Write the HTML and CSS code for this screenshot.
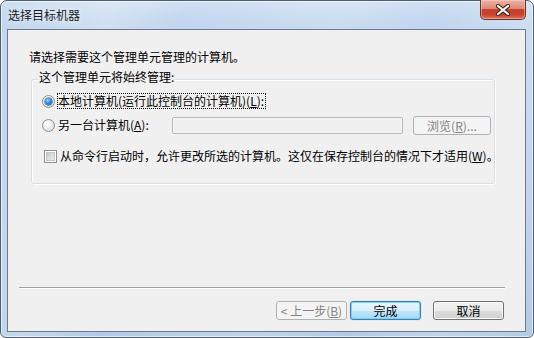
FILE: index.html
```html
<!DOCTYPE html>
<html lang="zh-CN">
<head>
<meta charset="utf-8">
<title>选择目标机器</title>
<link rel="stylesheet" href="styles.css">
</head>
<body>
<div class="window">
  <div class="titlebar">
    <span class="title">选择目标机器</span>
    <div class="close">
      <svg width="14" height="12" viewBox="0 0 14 12">
        <path d="M2 2 L12 10 M12 2 L2 10" stroke="#4a2a25" stroke-width="4.2" stroke-linecap="round" fill="none"/>
        <path d="M2 2 L12 10 M12 2 L2 10" stroke="#ffffff" stroke-width="2.2" stroke-linecap="round" fill="none"/>
      </svg>
    </div>
  </div>
  <div class="client">
    <div class="page">
      <p class="intro">请选择需要这个管理单元管理的计算机。</p>
      <div class="group">
        <span class="group-label">这个管理单元将始终管理:</span>
        <div class="row row-local">
          <span class="radio checked"></span>
          <span class="focus">本地计算机(运行此控制台的计算机)(<u>L</u>):</span>
        </div>
        <div class="row row-other">
          <span class="radio"></span>
          <span class="other-label">另一台计算机(<u>A</u>):</span>
          <span class="textbox"></span>
          <span class="btn btn-disabled btn-browse">浏览(<u>R</u>)...</span>
        </div>
        <div class="row row-check">
          <span class="checkbox"></span>
          <span class="check-label">从命令行启动时，允许更改所选的计算机。这仅在保存控制台的情况下才适用(<u>W</u>)。</span>
        </div>
      </div>
    </div>
    <div class="sep"></div>
    <div class="buttons">
      <span class="btn btn-disabled">&lt; 上一步(<u>B</u>)</span>
      <span class="btn btn-default">完成</span>
      <span class="btn btn-normal btn-cancel">取消</span>
    </div>
  </div>
</div>
</body>
</html>
```
FILE: styles.css
```css
* { box-sizing: border-box; }
html, body { margin: 0; padding: 0; }
body {
  width: 534px;
  height: 338px;
  overflow: hidden;
  background: #ffffff;
  font-family: "Noto Sans CJK SC", "Noto Sans", sans-serif;
  font-size: 12px;
  color: #000;
}
.window {
  width: 534px;
  height: 338px;
  display: flex;
  flex-direction: column;
  border: 1px solid #4f5e70;
  border-radius: 7px 7px 6px 6px;
  padding: 0 7px 5px 6px;
  background:
    linear-gradient(105deg, rgba(255,255,255,0) 0%, rgba(255,255,255,0.25) 18%, rgba(255,255,255,0) 30%, rgba(255,255,255,0.18) 55%, rgba(255,255,255,0) 70%, rgba(255,255,255,0.2) 85%, rgba(255,255,255,0) 100%),
    linear-gradient(180deg, #cfe0f3 0%, #c2d6ee 20px, #bcd1eb 60%, #b3cae6 100%);
  box-shadow: inset 0 0 0 1px rgba(255,255,255,0.6);
}
.titlebar {
  height: 28px;
  display: flex;
  justify-content: space-between;
  align-items: flex-start;
}
.title {
  margin: 6px 0 0 1px;
  line-height: 16px;
  font-size: 12px;
  color: #1a1a1a;
  text-shadow: 0 0 6px rgba(255,255,255,0.9);
}
.close {
  width: 46px;
  height: 20px;
  margin-top: -1px;
  border: 1px solid #6a3128;
  border-top: none;
  border-radius: 0 0 5px 5px;
  background:
    linear-gradient(180deg, #eab3a6 0%, #dd8a78 45%, #c8432c 50%, #c5412b 75%, #dd7358 100%);
  box-shadow: inset 0 0 0 1px rgba(255,220,210,0.45);
  display: flex;
  align-items: center;
  justify-content: center;
}
.close svg { display: block; }
.client {
  height: 303px;
  border: 1px solid #6a798b;
  background: #f0f0f0;
  display: flex;
  flex-direction: column;
}
.page {
  flex: 1;
  padding-top: 19px;
  display: flex;
  flex-direction: column;
  align-items: flex-start;
}
.intro {
  margin: 0 0 0 21px;
  line-height: 16px;
}
.group {
  margin: 14px 0 0 23px;
  width: 464px;
  border: 1px solid #d5dfe5;
  border-radius: 3px;
  box-shadow: 1px 1px 0 #ffffff, inset 1px 1px 0 #ffffff;
  padding-bottom: 18px;
  display: flex;
  flex-direction: column;
}
.group-label {
  align-self: flex-start;
  margin: -11px 0 0 6px;
  padding: 0 1px;
  line-height: 16px;
  background: #f0f0f0;
}
.row {
  height: 18px;
  display: flex;
  align-items: center;
}
.row-local { margin-top: 7px; }
.row-other { margin-top: 6px; }
.row-check { margin-top: 13px; }
.radio {
  width: 13px;
  height: 13px;
  margin-left: 10px;
  border-radius: 50%;
  border: 1px solid #8e8f8f;
  background: radial-gradient(circle at 40% 35%, #ffffff 0%, #f2f2f2 35%, #d2d2d2 100%);
  display: flex;
  align-items: center;
  justify-content: center;
  flex: none;
}
.radio.checked::after {
  content: "";
  width: 7px;
  height: 7px;
  border-radius: 50%;
  background: radial-gradient(circle at 40% 35%, #8fe3ff 0%, #2b8ee0 45%, #0d4f9c 100%);
  box-shadow: 0 0 0 0.5px #1a3f78;
}
.focus {
  margin-left: 2px;
  border: 1px dotted #000;
  line-height: 14px;
  padding: 0 1px 0 0;
}
.other-label {
  margin-left: 3px;
  width: 114px;
  line-height: 16px;
}
.textbox {
  width: 231px;
  height: 17px;
  border: 1px solid #b6b9bc;
  border-radius: 2px;
  background: #f0f0f0;
  box-shadow: inset 0 0 0 1px #f7f7f7;
}
.checkbox {
  width: 13px;
  height: 13px;
  margin-left: 12px;
  border: 1px solid #8e8f8f;
  background: linear-gradient(135deg, #b9bdc2 0%, #dcdcdc 50%, #f4f4f4 100%);
  box-shadow: inset 0 0 0 1px #ffffff, inset 0 0 0 2px #c4c6c8;
  flex: none;
}
.check-label {
  margin-left: 3px;
  line-height: 16px;
  white-space: nowrap;
}
.btn {
  height: 19px;
  line-height: 17px;
  border-radius: 3px;
  text-align: center;
  white-space: nowrap;
  font-size: 12px;
  display: block;
}
.btn-disabled {
  border: 1px solid #adb2b5;
  background: #f4f4f4;
  color: #838383;
}
.btn-browse {
  width: 78px;
  margin-left: 10px;
}
.sep {
  height: 2px;
  margin: 0 20px 0 11px;
  border-top: 1px solid #a0a0a0;
  border-bottom: 1px solid #ffffff;
}
.buttons {
  margin: 12px 0 11px 0;
  padding-right: 21px;
  display: flex;
  justify-content: flex-end;
}
.buttons .btn { width: 71px; }
.btn-default {
  margin-left: 3px;
  border: 1px solid #3c7fb1;
  background: linear-gradient(180deg, #eaf6fd 0%, #d9f0fc 50%, #bee6fd 51%, #a7d9f5 100%);
  box-shadow: inset 0 0 0 1px #7fd0f4, 0 0 1px #48b2ee;
}
.btn-normal {
  border: 1px solid #707070;
  background: linear-gradient(180deg, #f2f2f2 0%, #ebebeb 50%, #dddddd 51%, #cfcfcf 100%);
  box-shadow: inset 0 0 0 1px #fcfcfc;
}
.btn-cancel { margin-left: 12px; }
u { text-decoration: underline; text-underline-offset: 1px; }
```
